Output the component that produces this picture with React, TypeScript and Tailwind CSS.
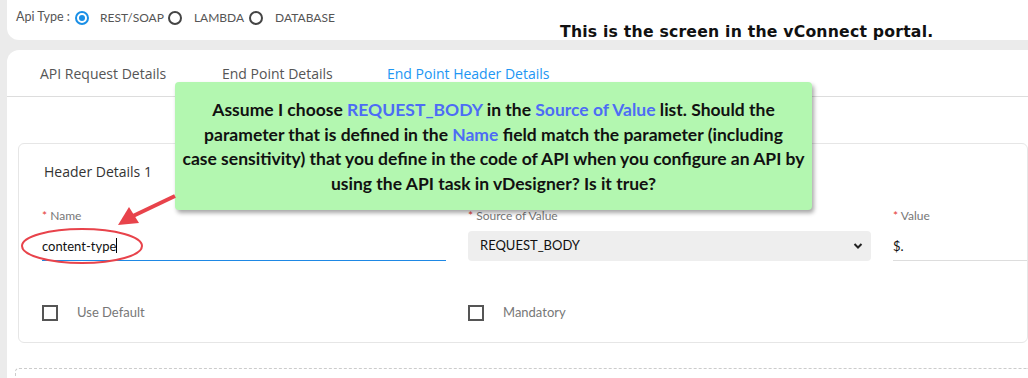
import React from 'react'

const Radio = ({ checked }: { checked?: boolean }) =>
  checked ? (
    <span className="w-[14px] h-[14px] rounded-full border-2 border-[#1a8fe6] flex items-center justify-center">
      <span className="w-[6px] h-[6px] rounded-full bg-[#1a8fe6]" />
    </span>
  ) : (
    <span className="w-[14px] h-[14px] rounded-full border-2 border-[#444]" />
  )

const Req = ({ children }: { children: React.ReactNode }) => (
  <div className="text-[12px] text-[#777] leading-[16px]">
    <span className="text-[#e53935]">* </span>
    {children}
  </div>
)

const Check = ({ label }: { label: string }) => (
  <div className="flex items-center gap-[19px]">
    <span className="w-[16px] h-[16px] border-2 border-[#555]" />
    <span className="text-[13px] text-[#777]">{label}</span>
  </div>
)

export default function App() {
  const blue = 'text-[#4d6cf5]'
  return (
    <div className="relative w-[1028px] h-[378px] overflow-hidden bg-[#ebebeb] font-['Lato',sans-serif]">
      <div className="ml-[7px] h-[40px] bg-white rounded-bl-[12px] flex items-start pt-[8px] pl-[9px] text-[12px] text-[#555]">
        <span className="mr-[5px] text-[12.5px]">Api Type :</span>
        <span className="flex items-center gap-[11px] mt-[1px]">
          <Radio checked />
          <span className="mr-[4px]">REST/SOAP</span>
        </span>
        <span className="flex items-center gap-[12px] mt-[1px]">
          <Radio />
          <span className="mr-[5px]">LAMBDA</span>
        </span>
        <span className="flex items-center gap-[12px] mt-[1px]">
          <Radio />
          <span>DATABASE</span>
        </span>
      </div>

      <div className="mt-[10px] ml-[7px] h-[340px] bg-white rounded-tl-[12px]">
        <div className="h-[47px] border-b border-[#dddddd] flex items-center pl-[33px] text-[14px] text-[#555] font-['Open_Sans',sans-serif]">
          <span className="w-[182px]">API Request Details</span>
          <span className="w-[165px]">End Point Details</span>
          <span className="text-[#2196f3]">End Point Header Details</span>
        </div>
        <div className="pl-[11px] pt-[46px]">
          <div className="h-[200px] border border-[#e6e6e6] rounded-[6px] pl-[23px] pt-[17px]">
            <div className="text-[14px] text-[#333] font-['Open_Sans',sans-serif] pl-[2px]">Header Details 1</div>
            <div className="flex gap-[22px] mt-[26px]">
              <div className="w-[404px]">
                <Req>Name</Req>
                <div className="mt-[13px] h-[24px] border-b border-[#1e88e5] text-[13px] text-[#111] flex items-start">
                  content-type<span className="w-px h-[15px] bg-black mt-[1px]" />
                </div>
              </div>
              <div className="w-[403px]">
                <Req>Source of Value</Req>
                <div className="mt-[7px] h-[30px] bg-[#eeeeee] rounded-[4px] flex items-center justify-between pl-[12px] pr-[8px] text-[13px] text-[#111]">
                  <span>REQUEST_BODY</span>
                  <svg width="10" height="8" viewBox="0 0 10 8">
                    <path d="M1.5 2 L5 5.5 L8.5 2" fill="none" stroke="#222" strokeWidth="2" />
                  </svg>
                </div>
              </div>
              <div className="flex-1">
                <Req>Value</Req>
                <div className="mt-[13px] h-[24px] border-b border-[#ddd] text-[13px] text-[#111]">$.</div>
              </div>
            </div>
            <div className="flex gap-[22px] mt-[42px]">
              <div className="w-[404px]">
                <Check label="Use Default" />
              </div>
              <div className="w-[403px]">
                <Check label="Mandatory" />
              </div>
            </div>
          </div>
          <div className="mt-[25px] -ml-[3px] h-[20px] border-t border-l border-dashed border-[#cccccc] rounded-tl-[4px]" />
        </div>
      </div>

      <div className="absolute left-[560px] top-[20px] text-[15.7px] font-bold text-[#111] font-['DejaVu_Sans',sans-serif] tracking-[0.2px]">
        This is the screen in the vConnect portal.
      </div>

      <div className="absolute left-[175px] top-[82px] w-[637px] h-[128px] bg-[#b3f7b0] rounded-[4px] shadow-[2px_3px_4px_rgba(0,0,0,0.35)] flex items-center justify-center pt-[2px] text-center text-[17.5px] leading-[24.5px] font-bold text-[#111] font-['Lato',sans-serif] whitespace-nowrap">
        <div>
          Assume I choose <span className={blue}>REQUEST_BODY</span> in the <span className={blue}>Source of Value</span> list. Should the
          <br />
          parameter that is defined in the <span className={blue}>Name</span> field match the parameter (including
          <br />
          case sensitivity) that you define in the code of API when you configure an API by
          <br />
          using the API task in vDesigner? Is it true?
        </div>
      </div>

      <svg className="absolute left-0 top-0" width="1028" height="378">
        <ellipse cx="82" cy="246" rx="60" ry="17" fill="none" stroke="#e8434b" strokeWidth="2" />
        <line x1="175" y1="196" x2="133" y2="216" stroke="#e8434b" strokeWidth="4" />
        <polygon points="118,225 129,207 139,223" fill="#e8434b" />
      </svg>
    </div>
  )
}
